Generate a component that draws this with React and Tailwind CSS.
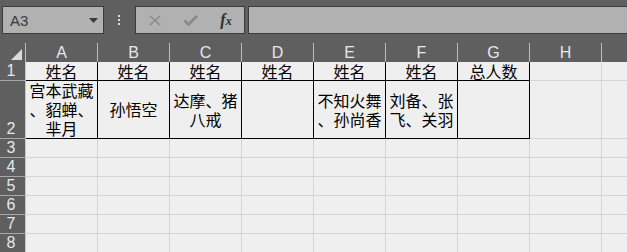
import React from "react";

const COLS = ["A", "B", "C", "D", "E", "F", "G", "H", ""];

const row1 = ["姓名", "姓名", "姓名", "姓名", "姓名", "姓名", "总人数", "", ""];
const row2 = [
  ["宫本武藏", "、貂蝉、", "芈月"],
  ["孙悟空"],
  ["达摩、猪", "八戒"],
  [],
  ["不知火舞", "、孙尚香"],
  ["刘备、张", "飞、关羽"],
  [],
  [],
  [],
];

const cjk = { fontFamily: '"Noto Sans CJK SC", "Noto Sans", sans-serif' };
const lat = { fontFamily: '"Liberation Sans", Arial, sans-serif' };

function RowHead({ n, tall }) {
  return (
    <div
      className={
        tall
          ? "h-[58px] bg-[#5f5f5f] border-r border-r-[#c8c8c8] border-b border-b-[#a8a8a8] flex items-end justify-center text-[16px] leading-[18px] text-[#e4e8ee] pr-[3px]"
          : "h-[19px] bg-[#5f5f5f] border-r border-r-[#c8c8c8] border-b border-b-[#a8a8a8] flex items-end justify-center text-[16px] leading-[18px] text-[#e4e8ee] pr-[3px]"
      }
      style={lat}
    >
      {n}
    </div>
  );
}

export default function App() {
  return (
    <div className="w-[627px] h-[252px] bg-[#5f5f5f] overflow-hidden relative">
      {/* top bar */}
      <div className="h-[43px] flex items-start pt-[6px] pl-[2px]">
        <div className="w-[102px] h-[28px] bg-[#b1b1b1] border border-[#3c3c3c] flex items-center pl-[7px] pr-[5px] shrink-0">
          <span className="text-[15px] text-[#3a3a3a] flex-1 leading-none" style={lat}>
            A3
          </span>
          <svg width="9" height="5" viewBox="0 0 9 5">
            <polygon points="0,0 9,0 4.5,5" fill="#3a3a3a" />
          </svg>
        </div>
        <div className="w-[31px] h-[28px] flex flex-col items-center justify-center gap-[2px] shrink-0 pr-[1px]">
          <div className="w-[2px] h-[2px] bg-[#dedede]" />
          <div className="w-[2px] h-[2px] bg-[#dedede]" />
          <div className="w-[2px] h-[2px] bg-[#dedede]" />
        </div>
        <div className="w-[110px] h-[28px] bg-[#b1b1b1] border border-[#3c3c3c] flex items-center shrink-0">
          <div className="w-[36px] flex justify-center pl-[2px]">
            <svg width="12" height="11" viewBox="0 0 12 11">
              <path d="M1 1 L11 10 M11 1 L1 10" stroke="#8a8a8a" strokeWidth="1.6" fill="none" />
            </svg>
          </div>
          <div className="w-[36px] flex justify-center">
            <svg width="15" height="11" viewBox="0 0 15 11">
              <path d="M1.5 5.5 L5.5 9.5 L14 1" stroke="#8a8a8a" strokeWidth="2.6" fill="none" />
            </svg>
          </div>
          <div className="w-[36px] flex justify-center items-baseline text-[#2e2e2e]" style={{ fontFamily: '"Liberation Serif", serif' }}>
            <span className="italic font-bold text-[16px] leading-none">f</span>
            <span className="italic font-bold text-[12px] leading-none">x</span>
          </div>
        </div>
        <div className="ml-[3px] w-[400px] h-[28px] bg-[#b1b1b1] border border-[#3c3c3c] shrink-0" />
      </div>

      {/* grid */}
      <div className="grid grid-cols-[26px_repeat(9,72px)]">
        {/* corner */}
        <div className="h-[19px] bg-[#5f5f5f] border-r border-r-[#bdbdbd] flex items-end justify-end pr-[3px] pb-[2px]">
          <svg width="11" height="11" viewBox="0 0 11 11">
            <polygon points="11,0 11,11 0,11" fill="#dcdcdc" />
          </svg>
        </div>
        {COLS.map((c, i) => (
          <div
            key={"h" + i}
            className="h-[19px] bg-[#5f5f5f] border-r border-r-[#bdbdbd] flex items-end justify-center text-[16px] leading-[18px] text-[#e4e8ee]"
            style={lat}
          >
            {c}
          </div>
        ))}

        {/* row 1 */}
        <RowHead n="1" />
        {row1.map((t, i) => (
          <div
            key={"r1" + i}
            className={
              i < 7
                ? "h-[19px] bg-[#efefef] border-r border-b border-black flex items-end justify-center text-[16px] leading-[18px] text-black whitespace-nowrap"
                : "h-[19px] bg-[#efefef] border-r border-b border-[#d4d4d4] flex items-end justify-center text-[16px] leading-[18px] text-black whitespace-nowrap"
            }
            style={cjk}
          >
            {t}
          </div>
        ))}

        {/* row 2 */}
        <RowHead n="2" tall />
        {row2.map((lines, i) => (
          <div
            key={"r2" + i}
            className={
              i < 7
                ? "h-[58px] bg-[#efefef] border-r border-b border-black flex flex-col items-center justify-center text-[16px] leading-[19px] text-black whitespace-nowrap"
                : "h-[58px] bg-[#efefef] border-r border-b border-[#d4d4d4] flex flex-col items-center justify-center text-[16px] leading-[19px] text-black whitespace-nowrap"
            }
            style={cjk}
          >
            {lines.map((l, j) => (
              <div key={j}>{l}</div>
            ))}
          </div>
        ))}

        {/* rows 3-8 */}
        {[3, 4, 5, 6, 7, 8].map((n) => (
          <React.Fragment key={n}>
            <RowHead n={String(n)} />
            {COLS.map((c, i) => (
              <div key={"c" + n + "-" + i} className="h-[19px] bg-[#efefef] border-r border-b border-[#d4d4d4]" />
            ))}
          </React.Fragment>
        ))}
      </div>
    </div>
  );
}
